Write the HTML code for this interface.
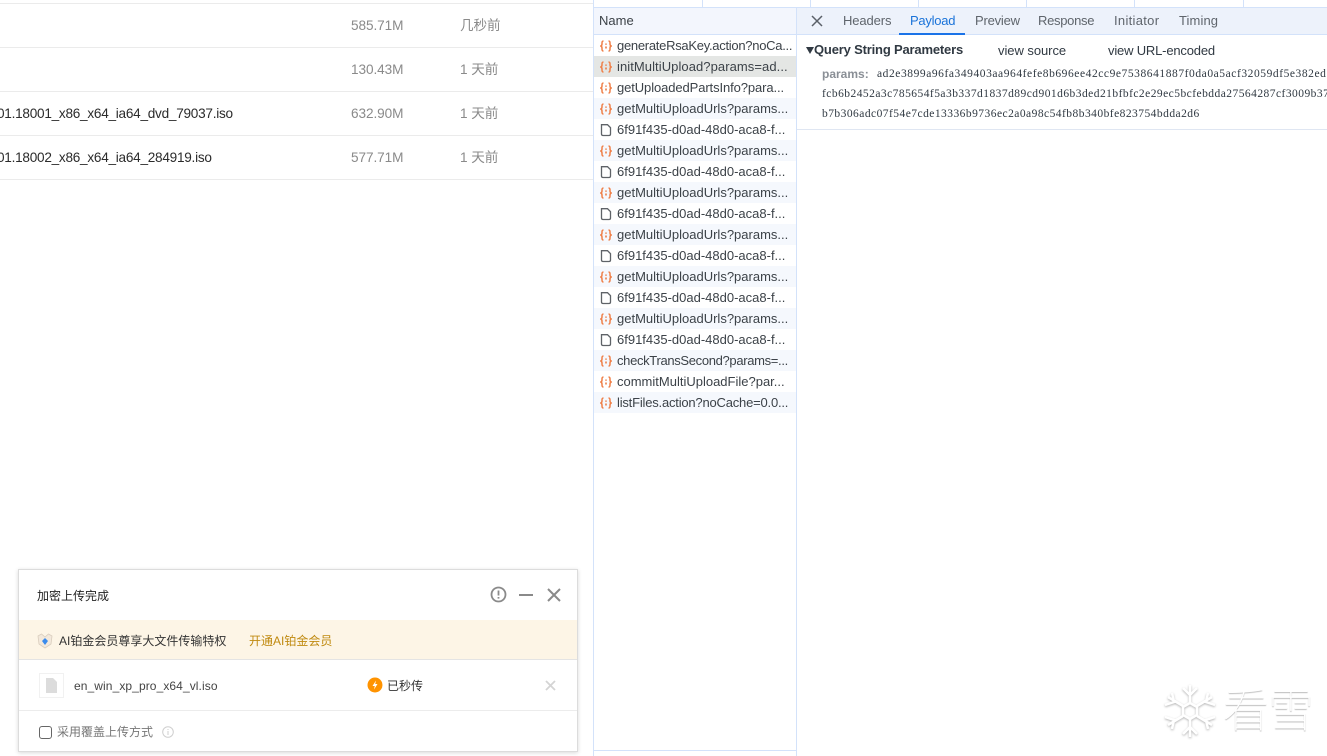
<!DOCTYPE html>
<html><head><meta charset="utf-8"><style>
*{box-sizing:border-box}
html,body{margin:0;padding:0;width:1327px;height:756px;overflow:hidden;background:#fff;font-family:"Liberation Sans","Noto Sans CJK SC",sans-serif}
.a{position:absolute;white-space:nowrap}
.l{position:absolute;left:0;width:593px;height:1px;background:#ebebeb}
.s{color:#8a8a8a;font-size:13.6px;line-height:22px;letter-spacing:-.07px}
.f{color:#2b2b2b;font-size:13.6px;line-height:22px;left:-3px;letter-spacing:-.26px}
.r{position:absolute;left:594px;width:202px;height:21px;font-size:13px;line-height:21px;color:#3c4248;overflow:hidden}
.r span{position:absolute;left:23px;top:0;white-space:nowrap}
.r svg{position:absolute;left:5px;top:4px}
.r.o{background:#f5f8fd}
.t{position:absolute;top:5px;font-size:13px;line-height:16px;color:#5f656c;letter-spacing:-.1px}
.m{font-family:'Liberation Serif',serif;font-size:11.5px;line-height:16px;color:#303942;letter-spacing:.46px}
</style></head><body>
<div class="l" style="top:3px"></div><div class="l" style="top:47px"></div><div class="l" style="top:91px"></div><div class="l" style="top:135px"></div><div class="l" style="top:179px"></div>
<div class="a s" style="left:351px;top:15px">585.71M</div><div class="a s" style="left:460px;top:15px">几秒前</div>
<div class="a s" style="left:351px;top:59px">130.43M</div><div class="a s" style="left:460px;top:59px">1 天前</div>
<div class="a f" style="top:103px">01.18001_x86_x64_ia64_dvd_79037.iso</div><div class="a s" style="left:351px;top:103px">632.90M</div><div class="a s" style="left:460px;top:103px">1 天前</div>
<div class="a f" style="top:147px">01.18002_x86_x64_ia64_284919.iso</div><div class="a s" style="left:351px;top:147px">577.71M</div><div class="a s" style="left:460px;top:147px">1 天前</div>

<div class="a" style="left:593px;top:0;width:1px;height:756px;background:#d3e2fa"></div>
<div class="a" style="left:796px;top:8px;width:1px;height:748px;background:#d3e2fa"></div>
<div class="a" style="left:594px;top:7px;width:733px;height:1px;background:#d3e2fa"></div>
<div class="a" style="left:702px;top:0;width:1px;height:7px;background:#d3e2fa"></div>
<div class="a" style="left:810px;top:0;width:1px;height:7px;background:#d3e2fa"></div>
<div class="a" style="left:918px;top:0;width:1px;height:7px;background:#d3e2fa"></div>
<div class="a" style="left:1026px;top:0;width:1px;height:7px;background:#d3e2fa"></div>
<div class="a" style="left:1134px;top:0;width:1px;height:7px;background:#d3e2fa"></div>
<div class="a" style="left:1243px;top:0;width:1px;height:7px;background:#d3e2fa"></div>

<div class="a" style="left:594px;top:8px;width:202px;height:26px;background:#f3f6fd;font-size:13px;line-height:26px;color:#3c4248;padding-left:5px">Name</div>
<div class="a" style="left:594px;top:34px;width:733px;height:1px;background:#d3e2fa"></div>
<div class="a" style="left:797px;top:8px;width:530px;height:26px;background:#edf2fb">
<svg class="a" style="left:14px;top:7px" width="12" height="12" viewBox="0 0 12 12"><path d="M1 1L11 11M11 1L1 11" stroke="#5a6068" stroke-width="1.5"/></svg>
<span class="t" style="left:46px">Headers</span>
<span class="t" style="left:113px;color:#1a73d9;letter-spacing:-.25px">Payload</span>
<span class="t" style="left:178px;letter-spacing:-.2px">Preview</span>
<span class="t" style="left:241px;letter-spacing:-.3px">Response</span>
<span class="t" style="left:317px;letter-spacing:.3px">Initiator</span>
<span class="t" style="left:382px;letter-spacing:.1px">Timing</span>
<div class="a" style="left:102px;top:25px;width:66px;height:2px;background:#1a73e8"></div>
</div>

<svg width="0" height="0" style="position:absolute"><defs>
<g id="x" fill="none" stroke="#ef7f48" stroke-width="1.5"><path d="M4.500 2C2.800 2 3 3.500 3 5 3 6.300 2.300 7 1.200 7 2.300 7 3 7.700 3 9 3 10.500 2.800 12 4.500 12"/><path d="M9.500 2C11.200 2 11 3.500 11 5 11 6.300 11.700 7 12.800 7 11.700 7 11 7.700 11 9 11 10.500 11.200 12 9.500 12"/><path d="M7 4.500V5.800M7 7.500V9.500" stroke="#e8743c"/></g>
<g id="d"><path d="M2.500 1.700H8.500L11.500 4.700V11C11.500 12 11 12.500 10 12.500H4C3 12.500 2.500 12 2.500 11Z" fill="none" stroke="#5f6368" stroke-width="1.3"/></g>
</defs></svg>

<div class="r" style="top:35px"><svg width="15" height="14"><use href="#x"/></svg><span style="letter-spacing:-.28px">generateRsaKey.action?noCa...</span></div>
<div class="r" style="top:56px;background:#e4e6e4"><svg width="15" height="14"><use href="#x"/></svg><span style="letter-spacing:.07px">initMultiUpload?params=ad...</span></div>
<div class="r" style="top:77px"><svg width="15" height="14"><use href="#x"/></svg><span style="letter-spacing:-.1px">getUploadedPartsInfo?para...</span></div>
<div class="r o" style="top:98px"><svg width="15" height="14"><use href="#x"/></svg><span>getMultiUploadUrls?params...</span></div>
<div class="r" style="top:119px"><svg width="15" height="14"><use href="#d"/></svg><span>6f91f435-d0ad-48d0-aca8-f...</span></div>
<div class="r o" style="top:140px"><svg width="15" height="14"><use href="#x"/></svg><span>getMultiUploadUrls?params...</span></div>
<div class="r" style="top:161px"><svg width="15" height="14"><use href="#d"/></svg><span>6f91f435-d0ad-48d0-aca8-f...</span></div>
<div class="r o" style="top:182px"><svg width="15" height="14"><use href="#x"/></svg><span>getMultiUploadUrls?params...</span></div>
<div class="r" style="top:203px"><svg width="15" height="14"><use href="#d"/></svg><span>6f91f435-d0ad-48d0-aca8-f...</span></div>
<div class="r o" style="top:224px"><svg width="15" height="14"><use href="#x"/></svg><span>getMultiUploadUrls?params...</span></div>
<div class="r" style="top:245px"><svg width="15" height="14"><use href="#d"/></svg><span>6f91f435-d0ad-48d0-aca8-f...</span></div>
<div class="r o" style="top:266px"><svg width="15" height="14"><use href="#x"/></svg><span>getMultiUploadUrls?params...</span></div>
<div class="r" style="top:287px"><svg width="15" height="14"><use href="#d"/></svg><span>6f91f435-d0ad-48d0-aca8-f...</span></div>
<div class="r o" style="top:308px"><svg width="15" height="14"><use href="#x"/></svg><span>getMultiUploadUrls?params...</span></div>
<div class="r" style="top:329px"><svg width="15" height="14"><use href="#d"/></svg><span>6f91f435-d0ad-48d0-aca8-f...</span></div>
<div class="r o" style="top:350px"><svg width="15" height="14"><use href="#x"/></svg><span style="letter-spacing:-.33px">checkTransSecond?params=...</span></div>
<div class="r" style="top:371px"><svg width="15" height="14"><use href="#x"/></svg><span>commitMultiUploadFile?par...</span></div>
<div class="r o" style="top:392px"><svg width="15" height="14"><use href="#x"/></svg><span style="letter-spacing:-.2px">listFiles.action?noCache=0.0...</span></div>
<div class="a" style="left:594px;top:750px;width:202px;height:1px;background:#d3e2fa"></div>

<svg class="a" style="left:806px;top:47px" width="8" height="7"><path d="M0 0H8L4 7Z" fill="#303942"/></svg>
<div class="a" style="left:814px;top:42px;font-size:13px;line-height:16px;font-weight:bold;color:#303942;letter-spacing:-.18px">Query String Parameters</div>
<div class="a" style="left:998px;top:43px;font-size:13px;line-height:16px;color:#303942;letter-spacing:-.05px">view source</div>
<div class="a" style="left:1108px;top:43px;font-size:13px;line-height:16px;color:#303942;letter-spacing:-.18px">view URL-encoded</div>
<div class="a" style="left:822px;top:66px;font-size:12px;line-height:16px;font-weight:bold;color:#8a8f96">params:</div>
<div class="a m" style="left:877px;top:66px;letter-spacing:.56px">ad2e3899a96fa349403aa964fefe8b696ee42cc9e7538641887f0da0a5acf32059df5e382ed</div>
<div class="a m" style="left:822px;top:86px">fcb6b2452a3c785654f5a3b337d1837d89cd901d6b3ded21bfbfc2e29ec5bcfebdda27564287cf3009b37</div>
<div class="a m" style="left:822px;top:106px">b7b306adc07f54e7cde13336b9736ec2a0a98c54fb8b340bfe823754bdda2d6</div>
<div class="a" style="left:797px;top:129px;width:530px;height:1px;background:#dfe6f2"></div>

<div class="a" style="left:18px;top:569px;width:560px;height:183px;background:#fff;border:1px solid #dcdcdc;box-shadow:0 1px 4px rgba(0,0,0,.15)">
<div class="a" style="left:18px;top:17px;font-size:12px;line-height:17px;color:#222;margin-top:1px">加密上传完成</div>
<svg class="a" style="left:471px;top:16px" width="17" height="17" viewBox="0 0 17 17"><circle cx="8.500" cy="8.500" r="7" fill="none" stroke="#8a8a8a" stroke-width="1.800"/><path d="M8.500 4.500V9.500M8.500 11V12.600" stroke="#8a8a8a" stroke-width="1.800"/></svg>
<div class="a" style="left:500px;top:24px;width:14px;height:2px;background:#8a8a8a"></div>
<svg class="a" style="left:528px;top:18px" width="14" height="14" viewBox="0 0 14 14"><path d="M1 1L13 13M13 1L1 13" stroke="#8a8a8a" stroke-width="2"/></svg>
<div class="a" style="left:0;top:50px;width:558px;height:40px;background:#fdf5e6;border-bottom:1px solid #e4e4e4"></div>
<svg class="a" style="left:18px;top:62px" width="16" height="17" viewBox="0 0 16 17"><path d="M1 4L4.500 2 8 5 11.500 2 15 4 14 12 8 16 2 12Z" fill="#f3e9dc" stroke="#d9cdbd" stroke-width=".8"/><path d="M8 6L11 9 8 13 5 9Z" fill="#3a8bec"/></svg>
<div class="a" style="left:40px;top:62px;font-size:12px;line-height:17px;color:#333;margin-top:1px">AI铂金会员尊享大文件传输特权</div>
<div class="a" style="left:230px;top:62px;font-size:12px;line-height:17px;color:#c08a10;margin-top:1px">开通AI铂金会员</div>
<div class="a" style="left:20px;top:103px;width:25px;height:25px;border:1px solid #f1f1f1"></div>
<svg class="a" style="left:27px;top:108px" width="11" height="15"><path d="M0 0H7L11 4V15H0Z" fill="#dcdcdc"/></svg>
<div class="a" style="left:55px;top:108px;font-size:12px;line-height:17px;color:#444;letter-spacing:.09px">en_win_xp_pro_x64_vl.iso</div>
<svg class="a" style="left:348px;top:107px" width="16" height="16" viewBox="0 0 16 16"><circle cx="8" cy="8" r="7.500" fill="#ff9300"/><path d="M9 3.500L5.500 9H7.800L7 12.500 10.500 7H8.200Z" fill="#fff"/></svg>
<div class="a" style="left:368px;top:108px;font-size:12px;line-height:17px;color:#333">已秒传</div>
<svg class="a" style="left:526px;top:110px" width="11" height="11" viewBox="0 0 11 11"><path d="M1 1L10 10M10 1L1 10" stroke="#d4d4d4" stroke-width="1.800"/></svg>
<div class="a" style="left:0;top:140px;width:558px;height:1px;background:#ececec"></div>
<div class="a" style="left:20px;top:156px;width:13px;height:13px;border:1px solid #666;border-radius:3px"></div>
<div class="a" style="left:38px;top:154px;font-size:12px;line-height:17px;color:#777">采用覆盖上传方式</div>
<svg class="a" style="left:143px;top:156px" width="12" height="12" viewBox="0 0 12 12"><circle cx="6" cy="6" r="5.300" fill="none" stroke="#cfcfcf"/><path d="M6 5V9M6 3V4" stroke="#cfcfcf"/></svg>
</div>

<svg class="a" style="left:1162px;top:682px" width="56" height="58" viewBox="0 0 56 58" fill="none" stroke="#fff" stroke-width="2.500">
<g style="filter:drop-shadow(0 1px 1px rgba(0,0,0,.3))">
<path d="M28 3V21M21 6L28 13 35 6M28 37V55M21 52L28 45 35 52M6 15L21 24M3 23L12 20 10 11M50 15L35 24M53 23L44 20 46 11M6 43L21 34M3 35L12 38 10 47M50 43L35 34M53 35L44 38 46 47"/>
<path d="M28 21L35 25V33L28 37 21 33V25Z"/></g></svg>
<div class="a" style="left:1223px;top:680px;font-size:46px;line-height:56px;font-weight:100;color:#fff;font-family:'WenQuanYi Zen Hei','Noto Sans CJK SC',sans-serif;text-shadow:0 1px 1px rgba(0,0,0,.28);letter-spacing:-1px">看雪</div>
</body></html>
